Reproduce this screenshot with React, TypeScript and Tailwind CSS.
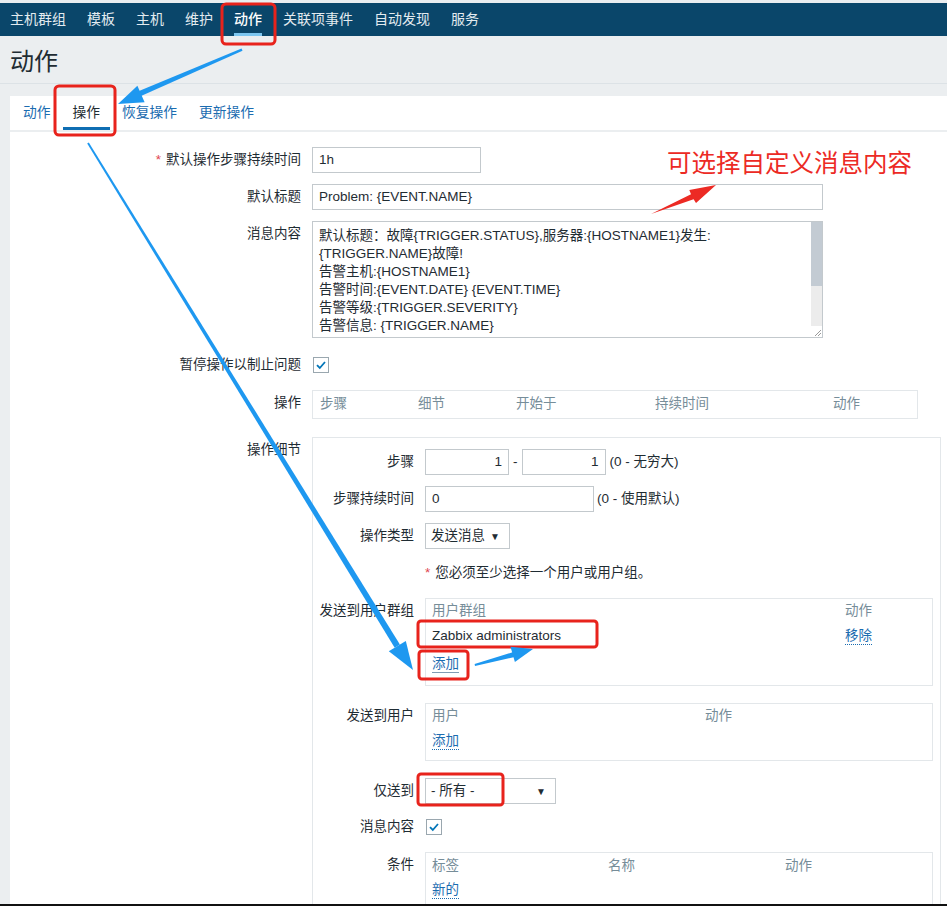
const navItems = ["主机群组", "模板", "主机", "维护", "动作", "关联项事件", "自动发现", "服务"];
const tabs = ["动作", "操作", "恢复操作", "更新操作"];

const msgLines = [
  "默认标题：故障{TRIGGER.STATUS},服务器:{HOSTNAME1}发生:",
  "{TRIGGER.NAME}故障!",
  "告警主机:{HOSTNAME1}",
  "告警时间:{EVENT.DATE} {EVENT.TIME}",
  "告警等级:{TRIGGER.SEVERITY}",
  "告警信息: {TRIGGER.NAME}",
];

const Row = ({
  label,
  required,
  labelWidth = "w-[291px]",
  className = "",
  children,
}: {
  label?: string;
  required?: boolean;
  labelWidth?: string;
  className?: string;
  children: React.ReactNode;
}) => (
  <div className={`flex items-start ${className}`}>
    <div className={`${labelWidth} shrink-0 h-[26px] leading-[26px] text-right whitespace-nowrap`}>
      {required && <span className="text-[#e0444f] mr-[5px]">*</span>}
      {label}
    </div>
    <div className="ml-[11px] flex-1">{children}</div>
  </div>
);

const Checkbox = () => (
  <div className="w-[16px] h-[16px] border border-[#9aa7af] bg-white flex items-center justify-center">
    <svg width="12" height="12" viewBox="0 0 12 12">
      <path d="M2 6.2 L4.8 9 L10 3" fill="none" stroke="#0275b8" strokeWidth="1.8" />
    </svg>
  </div>
);

const Link = ({ children, solid }: { children: React.ReactNode; solid?: boolean }) => (
  <span
    className={`text-[#1b6cb0] border-b ${solid ? "border-solid border-[#7f9cb4]" : "border-dotted border-[#1b6cb0]"} leading-[16px]`}
  >
    {children}
  </span>
);

export default function App() {
  return (
    <div className="relative w-[947px] h-[906px] overflow-hidden bg-[#ebeef0] text-[#1f2c33] font-['Liberation_Sans','Noto_Sans_CJK_SC',sans-serif] text-[13.5px]">
      <div className="h-[3px] bg-[#e9edf0]" />
      <div className="h-[33px] bg-[#0a466a] flex items-stretch pl-[10px] gap-[21px] text-[14px] text-[#e3ebf0]">
        {navItems.map((n) => (
          <div key={n} className={`relative flex items-center ${n === "动作" ? "font-medium text-white" : ""}`}>
            {n}
            {n === "动作" && <span className="absolute left-0 right-0 bottom-0 h-[3px] bg-[#7cc6f0]" />}
          </div>
        ))}
      </div>

      <div className="h-[47px] pl-[10px] pt-[4px] flex items-center text-[24px] text-[#1f2c33]">动作</div>
      <div className="h-[1px] bg-[#dce2e6]" />
      <div className="h-[12px]" />

      <div className="ml-[10px] bg-white h-[900px]">
        <div className="h-[34px] flex pl-[3px] gap-[2px] text-[13.75px]">
          {tabs.map((t) => (
            <div
              key={t}
              className={`relative px-[10px] flex items-center ${t === "操作" ? "text-[#1f2c33]" : "text-[#1b6cb0]"}`}
            >
              {t}
              {t === "操作" && <span className="absolute left-0 right-0 bottom-0 h-[3px] bg-[#0f6eb3]" />}
            </div>
          ))}
        </div>
        <div className="h-[2px] bg-[#ebeef0]" />

        <div className="pt-[15px]">
          <Row label="默认操作步骤持续时间" required>
            <div className="w-[169px] h-[26px] border border-[#c3c9cd] px-[6px] leading-[24px]">1h</div>
          </Row>
          <Row label="默认标题" className="mt-[11px]">
            <div className="w-[511px] h-[26px] border border-[#c3c9cd] px-[6px] leading-[24px]">Problem: {"{EVENT.NAME}"}</div>
          </Row>
          <Row label="消息内容" className="mt-[11px]">
            <div className="w-[511px] h-[117px] border border-[#c3c9cd] flex">
              <div className="flex-1 pl-[6px] pt-[5px] leading-[18px] overflow-hidden whitespace-nowrap">
                {msgLines.map((l) => (
                  <div key={l}>{l}</div>
                ))}
              </div>
              <div className="w-[11px] flex flex-col bg-[#ececec]">
                <div className="h-[64px] bg-[#c3cbd3]" />
                <div className="flex-1" />
                <div className="h-[11px] bg-white flex items-end justify-end">
                  <svg width="9" height="9" viewBox="0 0 9 9">
                    <path d="M8 2 L2 8 M8 5 L5 8" stroke="#9a9a9a" strokeWidth="1" />
                  </svg>
                </div>
              </div>
            </div>
          </Row>
          <Row label="暂停操作以制止问题" className="mt-[14px]">
            <div className="h-[26px] flex items-center pl-[1px]">
              <Checkbox />
            </div>
          </Row>
          <Row label="操作" className="mt-[12px]">
            <div className="w-[606px] h-[29px] border border-[#e3e7ea] flex items-center pl-[7px] text-[#768d99]">
              <span className="w-[98px]">步骤</span>
              <span className="w-[98px]">细节</span>
              <span className="w-[139px]">开始于</span>
              <span className="w-[178px]">持续时间</span>
              <span>动作</span>
            </div>
          </Row>
          <Row label="操作细节" className="mt-[18px]">
            <div className="w-[629px] h-[500px] border border-[#e3e7ea] pt-[11px] pr-[7px]">
              <Row label="步骤" labelWidth="w-[101px]">
                <div className="flex items-center h-[26px]">
                  <div className="w-[84px] h-[26px] border border-[#c3c9cd] px-[6px] leading-[24px] text-right">1</div>
                  <span className="mx-[4px]">-</span>
                  <div className="w-[84px] h-[26px] border border-[#c3c9cd] px-[6px] leading-[24px] text-right">1</div>
                  <span className="ml-[4px]">(0 - 无穷大)</span>
                </div>
              </Row>
              <Row label="步骤持续时间" labelWidth="w-[101px]" className="mt-[11px]">
                <div className="flex items-center h-[26px]">
                  <div className="w-[169px] h-[26px] border border-[#c3c9cd] px-[6px] leading-[24px]">0</div>
                  <span className="ml-[3px]">(0 - 使用默认)</span>
                </div>
              </Row>
              <Row label="操作类型" labelWidth="w-[101px]" className="mt-[11px]">
                <div className="w-[85px] h-[26px] border border-[#c3c9cd] px-[5px] flex items-center justify-between">
                  <span>发送消息</span>
                  <span className="text-[10px] mr-[4px]">▼</span>
                </div>
              </Row>
              <Row labelWidth="w-[101px]" className="mt-[11px]">
                <div className="h-[26px] leading-[26px]">
                  <span className="text-[#e0444f] mr-[5px]">*</span>您必须至少选择一个用户或用户组。
                </div>
              </Row>
              <Row label="发送到用户群组" labelWidth="w-[101px]" className="mt-[12px]">
                <div className="h-[88px] border border-[#e3e7ea] pl-[6px]">
                  <div className="h-[24px] flex items-center text-[#768d99]">
                    <span className="w-[413px]">用户群组</span>
                    <span>动作</span>
                  </div>
                  <div className="h-[26px] flex items-center">
                    <span className="w-[413px]">Zabbix administrators</span>
                    <Link>移除</Link>
                  </div>
                  <div className="h-[30px] flex items-center">
                    <Link solid>添加</Link>
                  </div>
                </div>
              </Row>
              <Row label="发送到用户" labelWidth="w-[101px]" className="mt-[17px]">
                <div className="h-[58px] border border-[#e3e7ea] pl-[6px]">
                  <div className="h-[24px] flex items-center text-[#768d99]">
                    <span className="w-[273px]">用户</span>
                    <span>动作</span>
                  </div>
                  <div className="h-[26px] flex items-center">
                    <Link>添加</Link>
                  </div>
                </div>
              </Row>
              <Row label="仅送到" labelWidth="w-[101px]" className="mt-[17px]">
                <div className="w-[131px] h-[26px] border border-[#c3c9cd] px-[5px] flex items-center justify-between">
                  <span>- 所有 -</span>
                  <span className="text-[10px] mr-[4px]">▼</span>
                </div>
              </Row>
              <Row label="消息内容" labelWidth="w-[101px]" className="mt-[10px]">
                <div className="h-[26px] flex items-center pl-[1px]">
                  <Checkbox />
                </div>
              </Row>
              <Row label="条件" labelWidth="w-[101px]" className="mt-[12px]">
                <div className="h-[80px] border border-[#e3e7ea] pl-[6px]">
                  <div className="h-[26px] flex items-center text-[#768d99]">
                    <span className="w-[176px]">标签</span>
                    <span className="w-[177px]">名称</span>
                    <span>动作</span>
                  </div>
                  <div className="h-[22px] flex items-center">
                    <Link>新的</Link>
                  </div>
                </div>
              </Row>
            </div>
          </Row>
        </div>
      </div>

      <div className="absolute left-[667px] top-[148px] text-[24.5px] leading-[32px] text-[#ec2a24] whitespace-nowrap">
        可选择自定义消息内容
      </div>

      <svg className="absolute inset-0 pointer-events-none" width="947" height="906" viewBox="0 0 947 906">
        <g fill="none" stroke="#e8231c" strokeWidth="3">
          <rect x="222" y="4" width="53" height="40" rx="4" />
          <rect x="55" y="86" width="60" height="49" rx="4" />
          <rect x="418" y="621" width="179" height="26" rx="3" />
          <rect x="419" y="651" width="49" height="28" rx="3" />
          <rect x="418" y="774" width="85" height="31" rx="3" />
        </g>
        <polygon points="651,214 691,194.2 689.3,190 716,185 696,203 693.6,199.2" fill="#ec2a24" />
        <g fill="#1e98f0">
          <polygon points="242.5,50.8 241.5,48.6 139,91 141,96" />
          <polygon points="118,104 137.4,85.7 144.6,102.3" />
          <polygon points="88.8,142.5 87.2,143.5 394.7,647.7 399.9,644.5" />
          <polygon points="413,670 388.8,651.3 405.8,640.9" />
          <polygon points="475,666 474.6,664 513.4,652 514.8,657" />
          <polygon points="533,649 510.5,646.7 514.9,662.1" />
        </g>
      </svg>
      <div className="absolute left-0 right-0 bottom-0 h-[2px] bg-[#111]" />
    </div>
  );
}
